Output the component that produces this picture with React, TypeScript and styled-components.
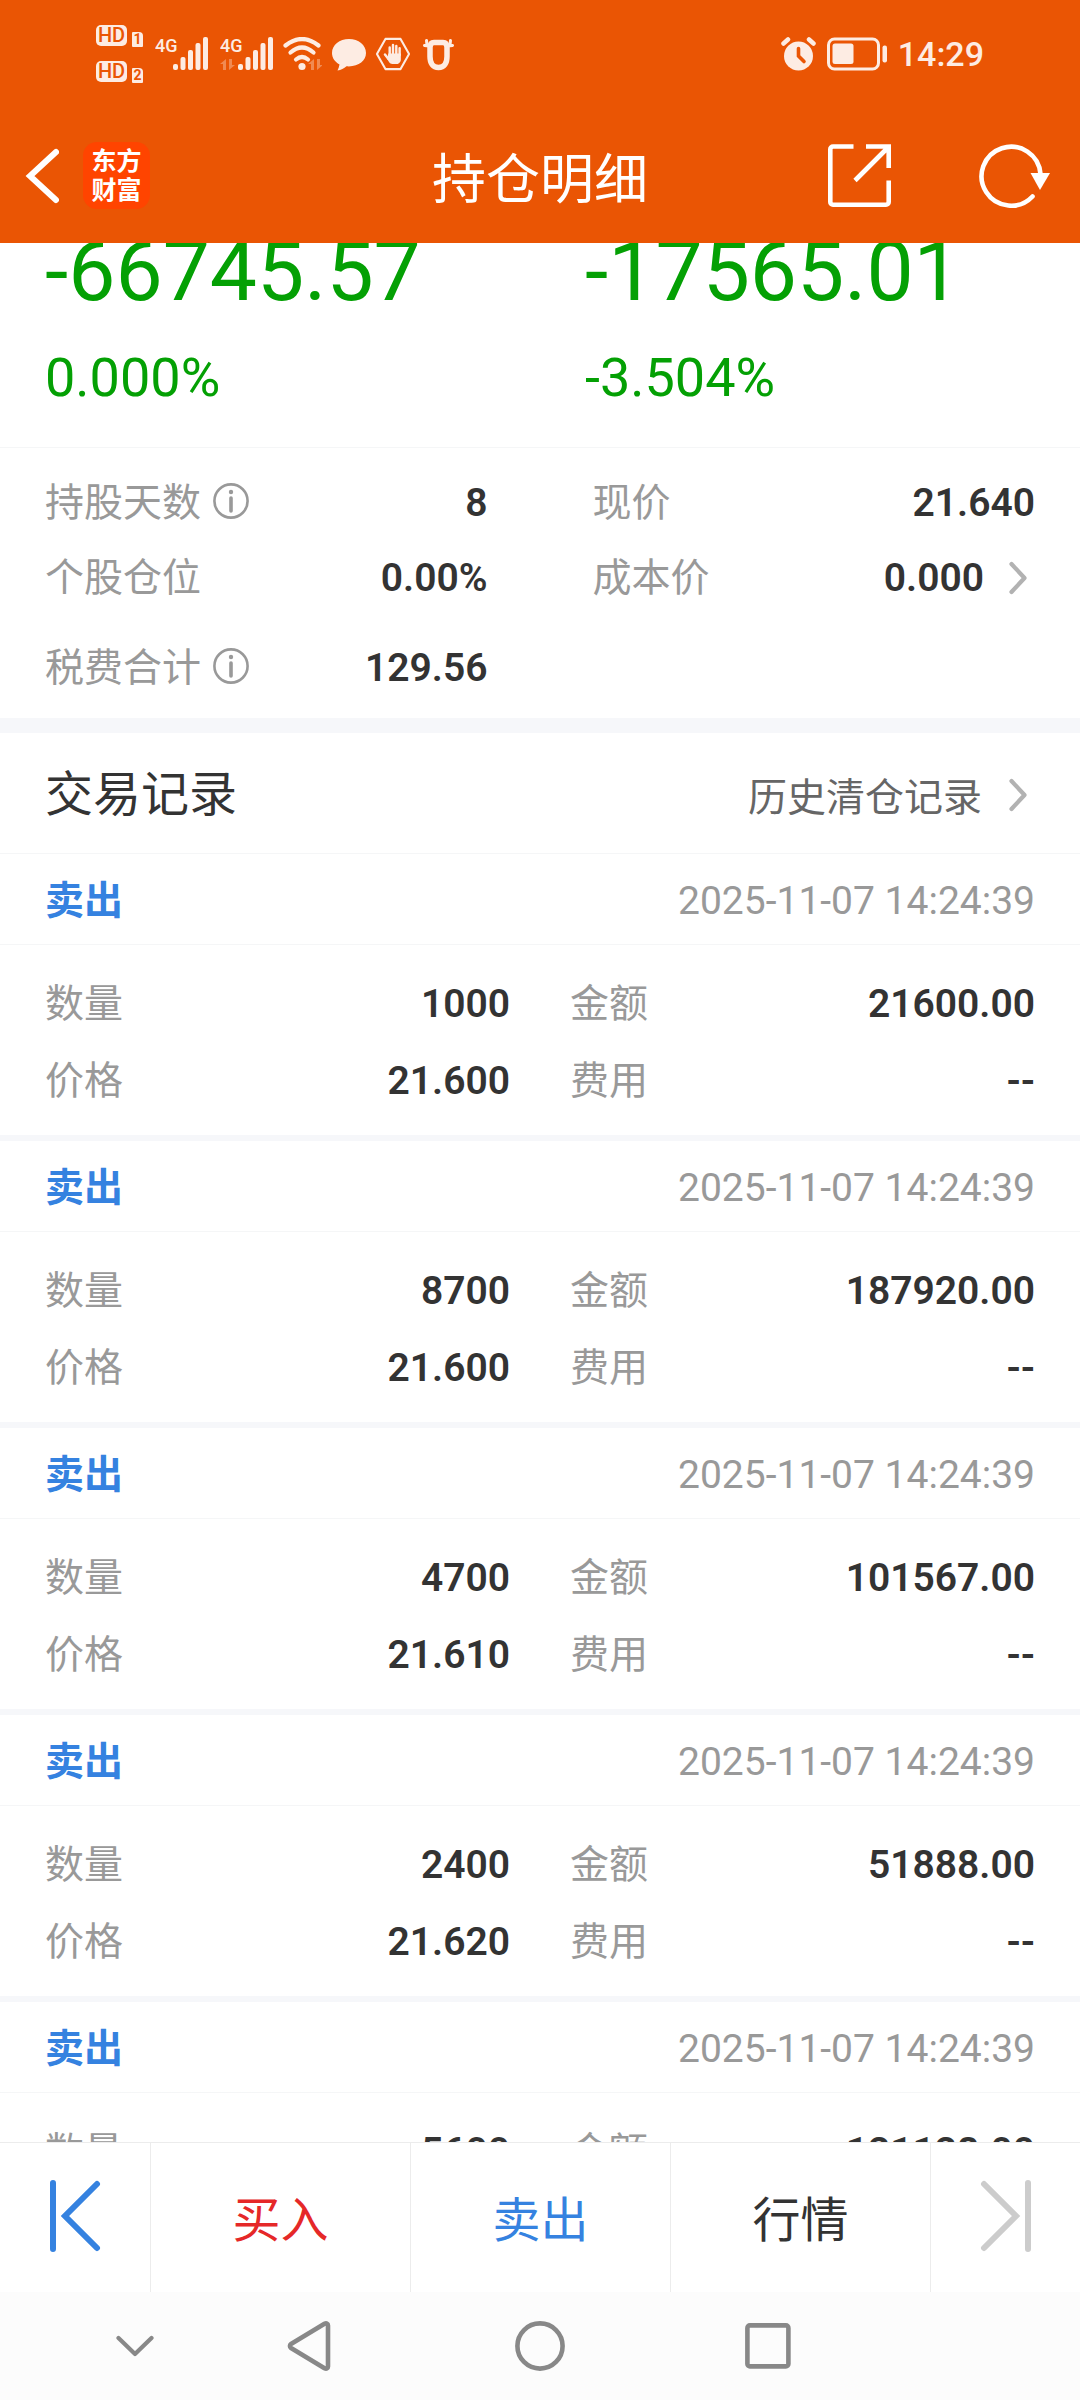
import React from 'react';
import styled, { createGlobalStyle } from 'styled-components';

const color = {
  brand: '#ea5504',
  logo: '#ff4400',
  status: '#fdece3',
  green: '#04a004',
  blue: '#3582e0',
  red: '#e52828',
  text: '#333333',
  mid: '#666666',
  label: '#999999',
  line: '#f5f6f7',
  band: '#f6f7fa',
  border: '#ececec',
};

const GlobalStyle = createGlobalStyle`
  *, *::before, *::after { box-sizing: border-box; }
  body {
    margin: 0;
    background: #fff;
    color: ${color.text};
    font-family: Roboto, "Noto Sans CJK SC", sans-serif;
    font-size: 39px;
    line-height: 1;
  }
  button {
    margin: 0;
    padding: 0;
    border: 0;
    background: none;
    color: inherit;
    font: inherit;
    cursor: pointer;
  }
  svg { display: block; flex: none; }
  h1, h2, p, dl, dd, dt, ul { margin: 0; padding: 0; font-weight: 400; }
`;

const Screen = styled.div`
  display: flex;
  flex-direction: column;
  height: 100vh;
  overflow: hidden;
`;

/* ---------- header ---------- */

const Header = styled.header`
  flex: none;
  background: ${color.brand};
  color: #fff;
`;

const StatusBar = styled.div`
  display: flex;
  align-items: center;
  justify-content: space-between;
  height: 108px;
  padding: 0 96px;
  color: ${color.status};
`;

const StatusGroup = styled.div<{ $gap: number }>`
  display: flex;
  align-items: center;
  gap: ${(p) => p.$gap}px;
`;

const Clock = styled.time`
  font-size: 34px;
  font-weight: 500;
  line-height: 40px;
`;

const HdStack = styled.div`
  display: flex;
  flex-direction: column;
  gap: 14px;
  width: 49px;
`;

const HdRow = styled.div`
  display: flex;
  align-items: flex-end;
  gap: 5px;
  height: 22px;
  color: ${color.brand};
  font-weight: 700;
`;

const HdBadge = styled.span`
  width: 31px;
  height: 21px;
  align-self: flex-start;
  border-radius: 5px;
  background: ${color.status};
  font-size: 20px;
  font-weight: 500;
  line-height: 21px;
  text-align: center;
`;

const SimBadge = styled.span`
  width: 11px;
  height: 15px;
  border-radius: 1px 4px 1px 1px;
  background: ${color.status};
  font-size: 14px;
  line-height: 15px;
  text-align: center;
`;

const TitleBar = styled.div`
  display: grid;
  grid-template-columns: 1fr auto 1fr;
  align-items: center;
  height: 135px;
  padding: 0 24px;
`;

const TitleSide = styled.div<{ $end?: boolean }>`
  display: flex;
  align-items: center;
  justify-content: ${(p) => (p.$end ? 'flex-end' : 'flex-start')};
  gap: ${(p) => (p.$end ? 88 : 24)}px;
`;

const Title = styled.h1`
  padding-top: 10px;
  font-size: 54px;
  line-height: 64px;
`;

const Logo = styled.div`
  width: 67px;
  height: 67px;
  padding: 5px 0;
  border-radius: 14px;
  background: ${color.logo};
  font-size: 25px;
  font-weight: 700;
  line-height: 29px;
  text-align: center;
`;

/* ---------- summary ---------- */

const Main = styled.main`
  flex: 1;
  min-height: 0;
  overflow-y: auto;
  scrollbar-width: none;
`;

const Totals = styled.section`
  display: grid;
  grid-template-columns: 1fr 1fr;
  margin-top: -13px;
  padding-bottom: 37px;
  border-bottom: 1px solid ${color.line};
  color: ${color.green};
`;

const Total = styled.div`
  display: flex;
  flex-direction: column;
  gap: 32px;
  padding-left: 45px;
`;

const TotalAmount = styled.p`
  font-size: 84px;
  line-height: 84px;
`;

const TotalRate = styled.p`
  font-size: 54px;
  line-height: 64px;
`;

const Stats = styled.dl`
  display: grid;
  grid-template-columns: 1fr 1fr;
  column-gap: 105px;
  padding: 17px 45px 13px;
  border-bottom: 15px solid ${color.band};
`;

const Pair = styled.div<{ $height: number; $spaced?: boolean }>`
  display: flex;
  align-items: center;
  justify-content: space-between;
  height: ${(p) => p.$height}px;
  margin-top: ${(p) => (p.$spaced ? 15 : 0)}px;
`;

const Label = styled.dt`
  display: flex;
  align-items: center;
  gap: 12px;
  color: ${color.label};
  line-height: 48px;
`;

const InfoButton = styled.button`
  padding-bottom: 4px;
`;

const Value = styled.dd`
  display: flex;
  align-items: center;
  gap: 25px;
  font-weight: 600;
  line-height: 48px;
`;

const ArrowButton = styled.button`
  display: flex;
  align-items: center;
  padding-right: 8px;
`;

/* ---------- trade records ---------- */

const SectionHead = styled.div`
  display: flex;
  align-items: center;
  justify-content: space-between;
  height: 121px;
  padding: 4px 45px 0;
  border-bottom: 1px solid ${color.line};
`;

const SectionTitle = styled.h2`
  font-size: 48px;
  line-height: 56px;
`;

const HistoryLink = styled.a`
  display: flex;
  align-items: center;
  gap: 27px;
  padding-right: 8px;
  color: ${color.mid};
  line-height: 48px;
  text-decoration: none;
`;

const HistoryText = styled.span`
  padding-top: 5px;
`;

const RecordList = styled.ul`
  list-style: none;
`;

const Record = styled.li`
  border-bottom: 6px solid ${color.band};
`;

const RecordHead = styled.div`
  display: flex;
  align-items: center;
  justify-content: space-between;
  height: 91px;
  padding: 3px 45px 0;
  border-bottom: 1px solid ${color.line};
  line-height: 48px;
`;

const Side = styled.strong`
  color: ${color.blue};
  font-weight: 700;
`;

const RecordTime = styled.time`
  color: ${color.label};
`;

const RecordBody = styled.dl`
  display: grid;
  grid-template-columns: 1fr 1fr;
  column-gap: 60px;
  padding: 20px 45px 16px;
`;

/* ---------- bottom bars ---------- */

const ActionBar = styled.nav`
  display: grid;
  flex: none;
  grid-template-columns: 150px 1fr 1fr 1fr 150px;
  height: 150px;
  border-top: 1px solid ${color.border};
  background: #fff;
`;

const ActionButton = styled.button<{ $tone?: string }>`
  display: flex;
  align-items: center;
  justify-content: center;
  padding-bottom: 4px;
  color: ${(p) => p.$tone ?? color.text};
  font-size: 48px;
  line-height: 56px;

  & + & {
    border-left: 1px solid ${color.border};
  }
`;

const ActionText = styled.span`
  padding-top: 10px;
`;

const SystemBar = styled.nav`
  display: grid;
  flex: none;
  grid-template-columns: 174fr 174fr 288fr 170fr;
  height: 108px;
  padding: 0 21% 0 4.5%;
  background: #fcfcfc;
  color: #888;
`;

const SystemButton = styled.button`
  display: flex;
  align-items: center;
  justify-content: center;
`;

/* ---------- icons ---------- */

const DataArrows = ({ x }: { x: number }) => (
  <g transform={`translate(${x} 22)`} fill="currentColor" opacity="0.35">
    <path d="M0 5 6 0v11H3V5z" />
    <path d="M15 6 9 11V0h3v6z" />
  </g>
);

const Signal = ({ width, data }: { width: number; data?: boolean }) => (
  <svg width={width} height="34" viewBox={`0 0 ${width} 34`} fill="currentColor">
    <text x="0" y="15" fontSize="18" fontWeight="500" fontFamily="Roboto, sans-serif">4G</text>
    {data && <DataArrows x={0} />}
    <rect x="18" y="27" width="5" height="6" rx="2" />
    <rect x="25.500" y="20" width="5" height="13" rx="2" />
    <rect x="33" y="13" width="5" height="20" rx="2" />
    <rect x="40.500" y="6" width="5" height="27" rx="2" />
    <rect x="48" y="0" width="5" height="33" rx="2" />
  </svg>
);

const Wifi = () => (
  <svg width="39" height="34" viewBox="0 0 39 34" fill="none" stroke="currentColor" strokeWidth="4.200" strokeLinecap="round">
    <path d="M2.500 8.500Q19 -4.500 35.500 8.500" />
    <path d="M7.500 15.500Q19 5.500 30.500 15.500" />
    <path d="M13 22.500Q19 17.500 25 22.500" />
    <circle cx="19" cy="29.500" r="3.600" fill="currentColor" stroke="none" />
    <g stroke="none"><DataArrows x={25} /></g>
  </svg>
);

const Bubble = () => (
  <svg width="34" height="34" viewBox="0 0 34 34" fill="currentColor">
    <path d="M17 2C7.500 2 0 8 0 16c0 5 3 9 7.500 11.500-.3 2-1 4-2 6 3.500-.5 6.500-2 9-4.200 11.500.9 19.500-5.300 19.500-13.300C34 8 26.500 2 17 2z" />
  </svg>
);

const HandHexagon = () => (
  <svg width="34" height="36" viewBox="0 0 36 36" fill="none" stroke="currentColor" strokeWidth="2.200" strokeLinejoin="round">
    <path d="M10 2h16l9 16-9 16H10L1 18z" />
    <g strokeWidth="2.600" strokeLinecap="round">
      <path d="M14.500 19V11M18 18V8.500M21.500 18V9.500M25 19v-7" />
      <path d="M13 23 9.500 18.500" />
    </g>
    <path d="M13 17.500h13.300V24c0 2-2 4.500-4 4.500h-5c-3 0-4-3-5.300-5z" fill="currentColor" stroke="none" />
  </svg>
);

const Mascot = () => (
  <svg width="34" height="34" viewBox="0 0 34 34" fill="none" stroke="currentColor" strokeLinecap="round">
    <path d="M14 5.500h9c3 0 4 2 4 5v9c0 7-3 11-8.500 11S10 26.500 10 19.500v-9c0-3 1-5 4-5z" strokeWidth="5.500" />
    <path d="M9 9 4.500 8.500M7 8 6.500 3.500M28 9l4.500-.5M30 8l.5-4.500" strokeWidth="3" />
  </svg>
);

const Alarm = () => (
  <svg width="35" height="34" viewBox="0 0 35 34" fill="none" stroke="currentColor" strokeLinecap="round">
    <circle cx="17.500" cy="19" r="14.500" fill="currentColor" stroke="none" />
    <path d="M2.500 6.500 7 2.500M32.500 6.500 28 2.500" strokeWidth="4.500" />
    <path d="M17.500 11.500V19l5.500 5.500" stroke={color.brand} strokeWidth="3.600" />
  </svg>
);

const Battery = () => (
  <svg width="60" height="34" viewBox="0 0 60 34" fill="currentColor">
    <rect x="1.500" y="2" width="50" height="30" rx="6" fill="none" stroke="currentColor" strokeWidth="3" />
    <rect x="5.500" y="6.500" width="21" height="20.500" rx="2.500" />
    <rect x="55.500" y="8.500" width="4.500" height="17" rx="2" />
  </svg>
);

const BackIcon = () => (
  <svg width="35" height="56" viewBox="0 0 35 56" fill="none" stroke="#fff" strokeWidth="6" strokeLinecap="round">
    <path d="M32 4 6 28l26 24" strokeLinejoin="miter" />
  </svg>
);

const ShareIcon = () => (
  <svg width="63" height="64" viewBox="0 0 63 64" fill="none" stroke="#fff" strokeWidth="4.600">
    <path d="M25.500 2.500H5a2.700 2.700 0 0 0-2.700 2.700V58a2.700 2.700 0 0 0 2.700 2.700h53a2.700 2.700 0 0 0 2.700-2.700V36.500" />
    <path d="M38 2.500h22.700V24M60 3.500 27 36.500" />
  </svg>
);

const RefreshIcon = () => (
  <svg width="77" height="64" viewBox="0 0 77 64" fill="none" stroke="#fff" strokeWidth="4.600" strokeLinecap="round">
    <path d="M61.500 30A29.500 29.500 0 1 0 53.500 52.500" />
    <path d="M51.500 29H71L61 46z" fill="#fff" stroke="none" />
  </svg>
);

const InfoIcon = () => (
  <svg width="36" height="36" viewBox="0 0 36 36" fill="none" stroke={color.label} strokeWidth="2.600">
    <circle cx="18" cy="18" r="16.600" />
    <path d="M18 15v13" strokeWidth="3.600" strokeLinecap="round" />
    <circle cx="18" cy="9" r="2.200" fill={color.label} stroke="none" />
  </svg>
);

const ArrowIcon = () => (
  <svg width="18" height="34" viewBox="0 0 18 34" fill="none" stroke="#b2b2b2" strokeWidth="4.200" strokeLinecap="round" strokeLinejoin="round">
    <path d="M2.500 3l13 14-13 14" />
  </svg>
);

const SkipIcon = ({ forward }: { forward?: boolean }) => (
  <svg width="52" height="72" viewBox="0 0 52 72" fill="none" stroke="currentColor" strokeWidth="6" strokeLinecap="round">
    {forward ? <path d="M4 4l32 32L4 68M48 3v66" /> : <path d="M4 3v66M48 4 16 36l32 32" />}
  </svg>
);

const systemIcons = [
  {
    name: '收起',
    icon: (
      <svg width="38" height="22" viewBox="0 0 38 22" fill="none" stroke="currentColor" strokeWidth="4.200" strokeLinecap="round" strokeLinejoin="round">
        <path d="M2.500 3 19 19 35.500 3" />
      </svg>
    ),
  },
  {
    name: '返回',
    icon: (
      <svg width="44" height="52" viewBox="0 0 44 52" fill="none" stroke="currentColor" strokeWidth="4.600" strokeLinejoin="round">
        <path d="M37.500 3.800 4 24a2.400 2.400 0 0 0 0 4l33.500 20.200c1.800 1 3.500.4 3.500-1.700V5.500c0-2.100-1.700-2.700-3.500-1.700z" />
      </svg>
    ),
  },
  {
    name: '主页',
    icon: (
      <svg width="50" height="50" viewBox="0 0 50 50" fill="none" stroke="currentColor" strokeWidth="4.600">
        <circle cx="25" cy="25" r="22.600" />
      </svg>
    ),
  },
  {
    name: '最近任务',
    icon: (
      <svg width="46" height="46" viewBox="0 0 46 46" fill="none" stroke="currentColor" strokeWidth="4.600">
        <rect x="2.400" y="2.400" width="41" height="41" rx="2.500" />
      </svg>
    ),
  },
];

/* ---------- data ---------- */

type Stat = { label: string; value: string; info?: boolean; more?: boolean; spaced?: boolean };

const stats: Stat[] = [
  { label: '持股天数', value: '8', info: true },
  { label: '现价', value: '21.640' },
  { label: '个股仓位', value: '0.00%' },
  { label: '成本价', value: '0.000', more: true },
  { label: '税费合计', value: '129.56', info: true, spaced: true },
];

const records = [
  { quantity: '1000', amount: '21600.00', price: '21.600' },
  { quantity: '8700', amount: '187920.00', price: '21.600' },
  { quantity: '4700', amount: '101567.00', price: '21.610' },
  { quantity: '2400', amount: '51888.00', price: '21.620' },
  { quantity: '5600', amount: '121128.00', price: '21.630' },
];

const Field = ({ label, value }: { label: string; value: string }) => (
  <Pair $height={77}>
    <Label>{label}</Label>
    <Value>{value}</Value>
  </Pair>
);

export default function App() {
  return (
    <Screen>
      <GlobalStyle />
      <Header>
        <StatusBar>
          <StatusGroup $gap={10}>
            <HdStack>
              {['1', '2'].map((sim) => (
                <HdRow key={sim}>
                  <HdBadge>HD</HdBadge>
                  <SimBadge>{sim}</SimBadge>
                </HdRow>
              ))}
            </HdStack>
            <Signal width={55} />
            <Signal width={53} data />
            <Wifi />
            <Bubble />
            <HandHexagon />
            <Mascot />
          </StatusGroup>
          <StatusGroup $gap={11}>
            <Alarm />
            <Battery />
            <Clock>14:29</Clock>
          </StatusGroup>
        </StatusBar>
        <TitleBar>
          <TitleSide>
            <button type="button" aria-label="返回"><BackIcon /></button>
            <Logo>东方<br />财富</Logo>
          </TitleSide>
          <Title>持仓明细</Title>
          <TitleSide $end>
            <button type="button" aria-label="分享"><ShareIcon /></button>
            <button type="button" aria-label="刷新"><RefreshIcon /></button>
          </TitleSide>
        </TitleBar>
      </Header>

      <Main>
        <Totals>
          <Total>
            <TotalAmount>-66745.57</TotalAmount>
            <TotalRate>0.000%</TotalRate>
          </Total>
          <Total>
            <TotalAmount>-17565.01</TotalAmount>
            <TotalRate>-3.504%</TotalRate>
          </Total>
        </Totals>

        <Stats>
          {stats.map((s) => (
            <Pair key={s.label} $height={75} $spaced={s.spaced}>
              <Label>
                {s.label}
                {s.info && <InfoButton type="button" aria-label={`${s.label}说明`}><InfoIcon /></InfoButton>}
              </Label>
              <Value>
                {s.value}
                {s.more && <ArrowButton type="button" aria-label={`${s.label}详情`}><ArrowIcon /></ArrowButton>}
              </Value>
            </Pair>
          ))}
        </Stats>

        <SectionHead>
          <SectionTitle>交易记录</SectionTitle>
          <HistoryLink href="#history">
            <HistoryText>历史清仓记录</HistoryText>
            <ArrowIcon />
          </HistoryLink>
        </SectionHead>

        <RecordList>
          {records.map((r) => (
            <Record key={r.quantity}>
              <RecordHead>
                <Side>卖出</Side>
                <RecordTime>2025-11-07 14:24:39</RecordTime>
              </RecordHead>
              <RecordBody>
                <Field label="数量" value={r.quantity} />
                <Field label="金额" value={r.amount} />
                <Field label="价格" value={r.price} />
                <Field label="费用" value="--" />
              </RecordBody>
            </Record>
          ))}
        </RecordList>
      </Main>

      <ActionBar>
        <ActionButton type="button" aria-label="上一只" $tone={color.blue}><SkipIcon /></ActionButton>
        <ActionButton type="button" $tone={color.red}><ActionText>买入</ActionText></ActionButton>
        <ActionButton type="button" $tone={color.blue}><ActionText>卖出</ActionText></ActionButton>
        <ActionButton type="button"><ActionText>行情</ActionText></ActionButton>
        <ActionButton type="button" aria-label="下一只" $tone="#cccccc"><SkipIcon forward /></ActionButton>
      </ActionBar>

      <SystemBar>
        {systemIcons.map((s) => (
          <SystemButton key={s.name} type="button" aria-label={s.name}>{s.icon}</SystemButton>
        ))}
      </SystemBar>
    </Screen>
  );
}
